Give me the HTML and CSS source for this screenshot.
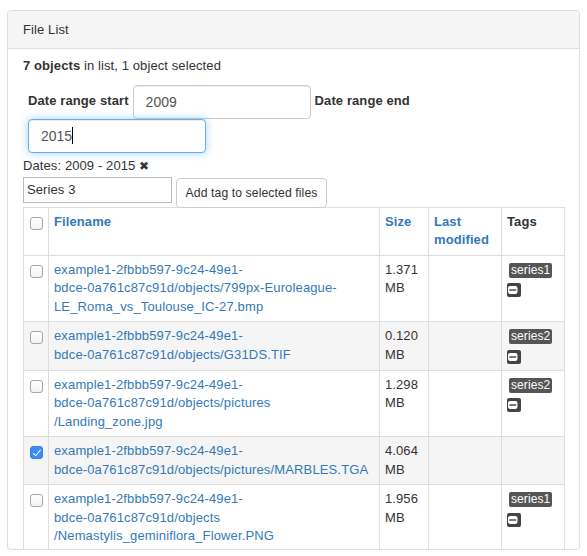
FILE: index.html
```html
<!DOCTYPE html>
<html>
<head>
<meta charset="utf-8">
<link rel="stylesheet" href="styles.css">
</head>
<body>
<div class="panel">
  <div class="panel-heading">File List</div>
  <div class="panel-body">
    <p class="summary"><b>7 objects</b> in list, 1 object selected</p>
    <div class="date-form">
      <label class="lbl">Date range start</label>
      <div class="form-control">2009</div>
      <label class="lbl">Date range end</label>
      <div class="form-control focused">2015<span class="caret"></span></div>
    </div>
    <div class="dates">Dates: 2009 - 2015 <span class="x">&#10006;</span></div>
    <div class="tag-row">
      <div class="tag-input">Series 3</div>
      <button class="btn">Add tag to selected files</button>
    </div>
    <table class="files">
      <colgroup>
        <col class="c-check"><col class="c-name"><col class="c-size"><col class="c-mod"><col class="c-tags">
      </colgroup>
      <thead>
        <tr>
          <th><span class="cb"></span></th>
          <th><a>Filename</a></th>
          <th><a>Size</a></th>
          <th><a>Last modified</a></th>
          <th>Tags</th>
        </tr>
      </thead>
      <tbody>
        <tr>
          <td><span class="cb"></span></td>
          <td><a>example1-2fbbb597-9c24-49e1-<br>bdce-0a761c87c91d/objects/799px-Euroleague-<br>LE_Roma_vs_Toulouse_IC-27.bmp</a></td>
          <td>1.371 MB</td>
          <td></td>
          <td><span class="tag">series1</span><span class="rm"><svg width="14" height="14" viewBox="0 0 14 14"><rect width="14" height="14" rx="2" fill="#444"/><rect x="1" y="3" width="9.5" height="8" rx="2.2" fill="#fff"/><rect x="2.2" y="6.3" width="7" height="1.4" fill="#444"/></svg></span></td>
        </tr>
        <tr class="odd">
          <td><span class="cb"></span></td>
          <td><a>example1-2fbbb597-9c24-49e1-<br>bdce-0a761c87c91d/objects/G31DS.TIF</a></td>
          <td>0.120 MB</td>
          <td></td>
          <td><span class="tag">series2</span><span class="rm"><svg width="14" height="14" viewBox="0 0 14 14"><rect width="14" height="14" rx="2" fill="#444"/><rect x="1" y="3" width="9.5" height="8" rx="2.2" fill="#fff"/><rect x="2.2" y="6.3" width="7" height="1.4" fill="#444"/></svg></span></td>
        </tr>
        <tr>
          <td><span class="cb"></span></td>
          <td><a>example1-2fbbb597-9c24-49e1-<br>bdce-0a761c87c91d/objects/pictures<br>/Landing_zone.jpg</a></td>
          <td>1.298 MB</td>
          <td></td>
          <td><span class="tag">series2</span><span class="rm"><svg width="14" height="14" viewBox="0 0 14 14"><rect width="14" height="14" rx="2" fill="#444"/><rect x="1" y="3" width="9.5" height="8" rx="2.2" fill="#fff"/><rect x="2.2" y="6.3" width="7" height="1.4" fill="#444"/></svg></span></td>
        </tr>
        <tr class="odd">
          <td><span class="cb checked"></span></td>
          <td><a>example1-2fbbb597-9c24-49e1-<br>bdce-0a761c87c91d/objects/pictures/MARBLES.TGA</a></td>
          <td>4.064 MB</td>
          <td></td>
          <td></td>
        </tr>
        <tr>
          <td><span class="cb"></span></td>
          <td><a>example1-2fbbb597-9c24-49e1-<br>bdce-0a761c87c91d/objects<br>/Nemastylis_geminiflora_Flower.PNG</a></td>
          <td>1.956 MB</td>
          <td></td>
          <td><span class="tag">series1</span><span class="rm"><svg width="14" height="14" viewBox="0 0 14 14"><rect width="14" height="14" rx="2" fill="#444"/><rect x="1" y="3" width="9.5" height="8" rx="2.2" fill="#fff"/><rect x="2.2" y="6.3" width="7" height="1.4" fill="#444"/></svg></span></td>
        </tr>
      </tbody>
    </table>
  </div>
</div>
</body>
</html>
```

FILE: styles.css
```css
* { box-sizing: border-box; }
html, body { margin: 0; padding: 0; background: #fff; }
body {
  font-family: "Liberation Sans", Arial, Helvetica, sans-serif;
  font-size: 13px;
  line-height: 1.42857;
  letter-spacing: 0.1px;
  color: #333;
  padding: 10px 7px 0 7px;
}
.panel {
  border: 1px solid #ddd;
  border-radius: 4px;
  height: 540px;
  overflow: hidden;
  box-shadow: 0 1px 1px rgba(0,0,0,.05);
}
.panel-heading {
  background: #f5f5f5;
  border-bottom: 1px solid #ddd;
  padding: 10px 15px;
  line-height: 17px;
  height: 38px;
}
.panel-body {
  padding: 8px 15px 15px 15px;
}
.summary { margin: 0 0 9px 0; }
.date-form {
  display: flex;
  flex-wrap: wrap;
  align-items: center;
  column-gap: 4px;
  padding-left: 5px;
}
.lbl { font-weight: bold; }
.form-control {
  width: 178px;
  height: 34px;
  padding: 6px 12px;
  font-size: 14px;
  line-height: 20px;
  letter-spacing: 0;
  color: #555;
  background: #fff;
  border: 1px solid #ccc;
  border-radius: 4px;
  box-shadow: inset 0 1px 1px rgba(0,0,0,.075);
}
.form-control.focused {
  border-color: #66afe9;
  box-shadow: inset 0 1px 1px rgba(0,0,0,.075), 0 0 8px rgba(102,175,233,.6);
}
.caret {
  display: inline-block;
  width: 1px;
  height: 17px;
  background: #000;
  vertical-align: -3px;
}
.dates { margin-top: 3px; line-height: 19px; }
.x { font-size: 12px; }
.tag-row {
  display: flex;
  align-items: flex-start;
  gap: 4px;
  margin-top: 1px;
}
.tag-input {
  width: 149px;
  height: 26px;
  border: 1px solid #bbb;
  padding: 2px 3px;
  line-height: 20px;
  background: #fff;
}
.btn {
  font-family: inherit;
  font-size: 12.2px;
  letter-spacing: 0.1px;
  color: #333;
  background: #fff;
  border: 1px solid #ccc;
  border-radius: 4px;
  width: 151px;
  height: 30px;
  padding: 5px 0;
  line-height: 18px;
  margin-top: 1px;
  text-align: center;
}
.files {
  width: 542px;
  table-layout: fixed;
  border-collapse: collapse;
  border: 1px solid #ddd;
  margin-top: -1px;
}
.c-check { width: 25px; }
.c-size { width: 49px; }
.c-mod { width: 73px; }
.c-tags { width: 63px; }
.files th, .files td {
  border: 1px solid #ddd;
  padding: 5px;
  vertical-align: top;
  text-align: left;
  white-space: normal;
}
.files th { font-weight: bold; }
.files a { color: #337ab7; text-decoration: none; white-space: nowrap; letter-spacing: 0.14px; }
.files th a { white-space: normal; letter-spacing: 0.1px; }
.files tr.odd td { background: #f5f5f5; }
.cb {
  display: block;
  width: 13px;
  height: 13px;
  margin: 4px 0 0 1px;
  border: 1px solid #a6a6a6;
  border-radius: 3px;
  background: linear-gradient(#fff, #f2f2f2);
  position: relative;
}
.cb.checked {
  background: #3b8cf6;
  border-color: #3583ea;
}
.cb.checked::after {
  content: "";
  position: absolute;
  left: 3.5px;
  top: 1px;
  width: 3px;
  height: 6.5px;
  border: solid #fff;
  border-width: 0 1.8px 1.8px 0;
  transform: rotate(40deg);
}
.tag {
  display: inline-block;
  background: #555;
  color: #fff;
  font-size: 12px;
  line-height: 15px;
  padding: 0 2px;
  border-radius: 2px;
  margin: 2px 0 0 2px;
  vertical-align: top;
}
.rm {
  display: block;
  width: 14px;
  height: 14px;
  margin-top: 4px;
}
.rm svg { display: block; }
```
